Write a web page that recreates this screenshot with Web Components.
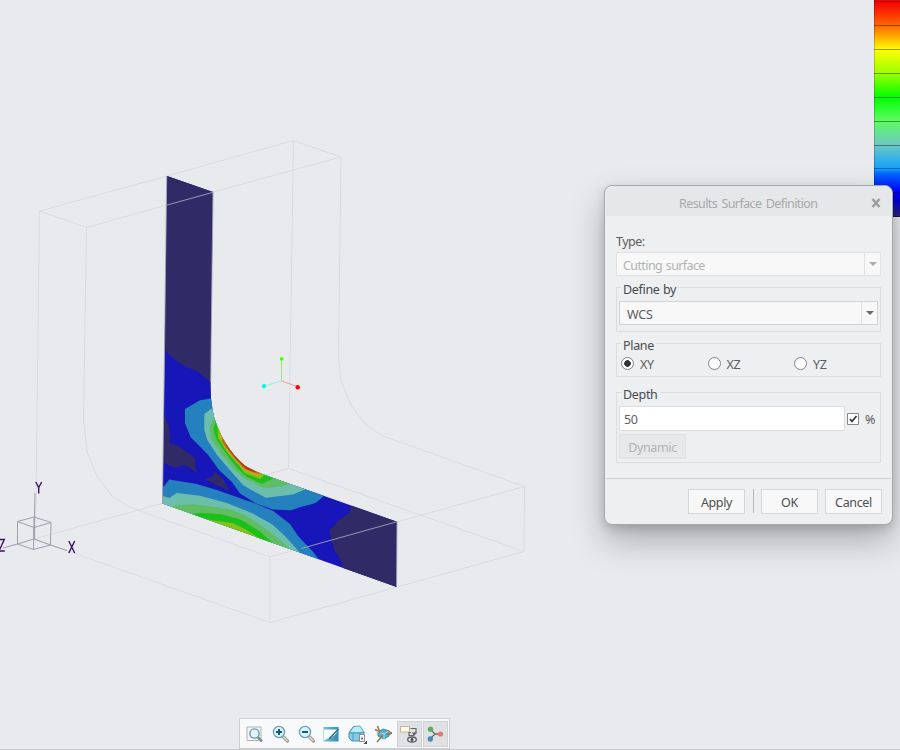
<!DOCTYPE html>
<html lang="en">
<head>
<meta charset="utf-8">
<title>Results Surface Definition</title>
<style>
html,body{margin:0;height:100%;overflow:hidden}
body{background:#e8eaed;font-family:"Noto Sans","Open Sans",sans-serif;font-size:12.5px;color:#5b5d60}
</style>
</head>
<body>
<sim-workspace>
  <stress-view slot="scene"></stress-view>
  <color-legend slot="legend"></color-legend>
  <surface-dialog slot="dialog" heading="Results Surface Definition">
    <field-label>Type:</field-label>
    <combo-box disabled>Cutting surface</combo-box>
    <group-box label="Define by" style="height:45px;margin-top:11px"><combo-box>WCS</combo-box></group-box>
    <group-box label="Plane" style="height:34px;margin-top:11px">
      <radio-row><radio-item checked>XY</radio-item><radio-item>XZ</radio-item><radio-item>YZ</radio-item></radio-row>
    </group-box>
    <group-box label="Depth" style="height:71px;margin-top:15px">
      <depth-field value="50"></depth-field>
      <push-button disabled style="width:67px;margin-top:3px">Dynamic</push-button>
    </group-box>
    <push-button slot="actions" style="width:57px">Apply</push-button>
    <button-divider slot="actions"></button-divider>
    <push-button slot="actions" style="width:57px;margin-right:7px">OK</push-button>
    <push-button slot="actions" style="width:57px">Cancel</push-button>
  </surface-dialog>
  <view-toolbar slot="toolbar">
    <tool-button icon="fit"></tool-button><tool-button icon="in"></tool-button><tool-button icon="out"></tool-button><tool-button icon="paint"></tool-button><tool-button icon="views"></tool-button><tool-button icon="datum"></tool-button><tool-button icon="notes" active></tool-button><tool-button icon="spin" active></tool-button>
  </view-toolbar>
</sim-workspace>
<script>
function define(name, html) {
  customElements.define(name, class extends HTMLElement {
    constructor() {
      super();
      this.attachShadow({mode: 'open'});
    }
    connectedCallback() {
      this.shadowRoot.innerHTML = typeof html === 'function' ? html(this) : html;
    }
  });
}

define('sim-workspace', `<style>
:host{display:grid;grid-template:1fr 32px / 1fr;width:900px;height:750px;position:relative;overflow:hidden;box-sizing:border-box}
:host::after{content:"";position:absolute;left:0;right:0;bottom:0;height:1px;background:#c9cbce}
::slotted([slot=scene]){position:absolute;left:0;top:0}
::slotted([slot=legend]){justify-self:end;align-self:start}
::slotted([slot=dialog]){position:absolute;left:604px;top:185px}
::slotted([slot=toolbar]){grid-row:2;justify-self:start;margin-left:239px}
</style><slot name="scene"></slot><slot name="legend"></slot><slot name="toolbar"></slot><slot name="dialog"></slot>`);

define('color-legend', `<style>
:host{display:block;box-sizing:border-box;width:26px;height:217px;position:relative;z-index:0;
background:repeating-linear-gradient(transparent 0 22.860px,#0006 22.860px 23.860px) 0 -21.500px/100% 240px no-repeat,
linear-gradient(#f00 0,#f50e00 5px,#ff6a00 26px,#ff0 50px,#9f0 74px,#0f0 97px,#5dfc62 121px,#6dc8c4 145px,#10a0ff 169px,#0064ff 174px,#00f 192px,#0000d8 200px,#2b2570 217px);box-shadow:inset 1px 0 #0003}
</style>`);

define('stress-view', `<style>:host{display:block;width:900px;height:750px}svg{display:block}</style>
<svg width="900" height="750" viewBox="0 0 900 750">
<defs><clipPath id="b"><path d="M167 176 213 192 211 340 210.7 382 211 398 212.3 408 214 417 217.500 427 222 437 228.3 447.500 234 455 240 461.500 246 466.500 251.7 469.500 262 474 397 521.7 396.6 587 162.5 503.5z"/></clipPath></defs>
<g fill="none" stroke="#dbdcdd">
<path d="M167 176 39.5 211 35.5 539M167 176 293 140.500 341 157 213 192 86.500 227.500 39.500 211M293.500 140.500 288.500 468.500 162 503.500 34 539M288.500 468.500 524 551.500 270 622.500 34 539M86.500 227.500 83.500 420 87 452 97 476 112 496 128 506 140 511 270 557V622.500M270 557 524.500 486.500 524 551.500M524.500 486.500 383 436 366 425 351 405 341 381 338.500 356 341 157"/></g>
<g clip-path="url(#b)">
<path fill="#1616b9" d="M150 170h260v430h-260z"/>
<g fill="#302b67">
<path d="M160 170h60v216L210.700 382.500 198.300 372 186.700 366.700 178.300 362.300 173 358 164 349.300 160 346z"/>
<path d="M160 405 164 415 168.500 425 170 431.700V443.300L178 445.700 186.700 451.700 195.300 458V467L197 473 190 468 183.300 465 175 467.700 160 461z"/>
<path d="M204.500 479.300 211.700 477 215 471.700 223 479 229.500 491z"/>
<path d="M352 504 349 513.300 340 519.300 329.300 531 334 549 340 559 345 572 410 600V510z"/></g>
<g fill="#2580be">
<path d="M220 398.500H211L200 400.300 185 409V423.300L190.700 437.300 208.300 455 219 470 231.700 481.700 240 493.500 256 503.500 273 509.500 291 510.300 301.700 506.700 315.700 503 325 495 300 460 240 440z"/>
<path d="M160 488 163 487.500 169.300 479.500 196.700 484 216.700 490 236.700 497 256.700 504 273.300 511 290 524 298 536 313 551.700 320 561 160 530z"/></g>
<g fill="#6abeab">
<path d="M220 402 212 408.300 204.300 414V430L207.300 440 217 455 229 469 243 485 250 489.300 266 497.700 293 494.500 306 489 280 460z"/>
<path d="M160 495 169.300 498 176.700 493 200 495.700 227 503 251.700 513 271.700 524 285 536 302 555 160 540z"/></g>
<g fill="#60bd63">
<path d="M220 408 214 416 209.300 428.300 211.700 440 222 455 232.700 467.500 243 477.300 263.300 488.300 281.700 486.500 292 483 260 455z"/>
<path d="M160 510 175 505.500 193.300 504.300 216.700 507.300 232 510 246.700 516 263 526.700 280 540 295 553 160 550z"/></g>
<g fill="#1bc01b">
<path d="M220 412 215.700 421 213.300 429.300 216.700 440 227 455 237.500 468.500 247 477 261.700 484 275 477.500 250 440z"/>
<path d="M190 514.500 200 512.800 221.700 514.300 241.700 520 260 531.500 274 544 230 550z"/></g>
<g fill="#89bf1c">
<path d="M221 421 217.300 427 218 438 228 453.500 238.500 465 245 473.300 260 479 265 474.500 250 440z"/>
<path d="M205 519 213.300 520.500 233.300 523.300 246.700 530 264 541 230 545z"/></g>
<path fill="#cba51b" d="M221 430 219.500 437 230 454 242 467.500 253 474.500 261 476 252 450z"/>
<path fill="#cb661c" d="M222 436 222 442 233 456.500 244 468.500 253 472.500 260 474.500 250 450z"/>
<path fill="#c42a1e" d="M225 441 226.500 446.500 237 460 247 469.500 256 472.500 250 450z"/>
</g>
<g fill="none" stroke="#a4a3b4" stroke-width=".9"><path d="M166.500 205.200 213 192.300M301 548.600 397 521.700"/><path d="M166.700 176 162.500 503.500M213 192 210.700 382M397 521.700 396.500 586.500"/></g>
<g fill="none" stroke="#a29caf"><path d="M35 493 34 539M34 539 50.500 545 67 550.500M34 539 17.500 544 3 548M17.500 521.500 34 517 51 522.500 34 527.500 17.500 521.500V544L33.500 549.500 50.500 545 51 522.500M34 527.500 33.500 549.500M34 517V539"/></g>
<g fill="none" stroke="#3a1260" stroke-width="1.400"><path d="M35.800 482 38.700 487.500 41.700 482M38.700 487.500V493.500M68.800 541 74.700 553M74.700 541 68.800 553M-1 539.500H4.300L-1 551H4.800"/></g>
<path d="M281.500 381V361" stroke="#92e683"/><path d="M281.500 381 266 385.500" stroke="#9beee5"/><path d="M281.500 381 296 386" stroke="#ee9a9d"/>
<circle cx="281.700" cy="358.800" r="1.900" fill="#48ff00"/><circle cx="264" cy="386.200" r="2.100" fill="#00fae4"/><circle cx="297.700" cy="387.200" r="2.200" fill="#f00"/>
</svg>`);

define('surface-dialog', el => `<style>
:host{display:flex;flex-direction:column;box-sizing:border-box;width:288.500px;height:339.500px;border:1px solid #a5a7a9;border-radius:8px;background:#eeeff1;z-index:1;box-shadow:0 16px 34px #0004,0 4px 10px #0002}
header{display:grid;grid-template-columns:30px 1fr 30px;align-items:center;justify-items:center;height:30px;margin:0 1px;background:#e6e7e9;border-radius:7px 7px 0 0;color:#a8a9ab}
header span{letter-spacing:-.6px;word-spacing:1.700px;padding:5px 0 0;white-space:nowrap}
header svg{margin:3px 0 0 1px}
main{flex:1;padding:17px 10.500px 0 11px;display:flex;flex-direction:column}
footer{display:flex;align-items:center;justify-content:flex-end;height:45px;margin:0 1px;border-top:1px solid #cdcfd1;padding-right:8.500px}
</style><header><i></i><span>${el.getAttribute('heading')}</span><svg width="10" height="10" viewBox="0 0 10 10"><path d="M1.500 1 8.500 9M8.500 1 1.500 9" stroke="#9c9d9f" stroke-width="2.600"/></svg></header><main><slot></slot></main><footer><slot name="actions"></slot></footer>`);

define('field-label', `<style>:host{display:block;height:19px;line-height:18px;letter-spacing:-.5px}</style><slot></slot>`);

define('combo-box', `<style>
:host{display:flex;box-sizing:border-box;height:24px;background:#f8f8f8;border:1px solid #d1d3d5}
:host([disabled]){border-color:#e0e1e3;color:#b0b2b4;letter-spacing:-.3px}
span{flex:1;padding:2px 0 0 7px;line-height:22px;letter-spacing:-.25px}
:host([disabled]) span{letter-spacing:-.6px;word-spacing:1px;padding-left:6px}
b{display:grid;place-items:center;width:15px;border-left:1px solid #dfe0e2}
i{border:4px solid transparent;border-top:4px solid #67696c;border-bottom:0}
:host([disabled]) i{border-top-color:#a9abad}
</style><span><slot></slot></span><b><i></i></b>`);

define('group-box', el => `<style>
:host{display:block;box-sizing:border-box;border:1px solid #dcdde0;position:relative;padding:13px 2px 0}
label{position:absolute;left:4px;top:-7px;line-height:18px;height:18px;padding:0 2px;background:#eeeff1;color:#484a4d;letter-spacing:-.32px;word-spacing:.5px;white-space:nowrap}
</style><label>${el.getAttribute('label')}</label><slot></slot>`);

define('radio-row', `<style>:host{display:grid;grid-template-columns:86.500px 86.500px 1fr;padding-left:2px}</style><slot></slot>`);

define('radio-item', `<style>
:host{display:flex;gap:6px;height:16px;line-height:16px;letter-spacing:-.4px}
i{box-sizing:border-box;width:13px;height:13px;border:1px solid #7f8184;border-radius:50%;background:#fff;margin-top:-.5px}
:host([checked]) i{background:radial-gradient(circle,#333 0 3px,#fff 3.600px)}
</style><i></i><span><slot></slot></span>`);

define('depth-field', el => `<style>
:host{display:flex;align-items:center;height:25px}
.v{box-sizing:border-box;width:226px;height:25px;line-height:24px;padding:1px 0 0 4px;border:1px solid #dcdde0;background:#fff;letter-spacing:-.5px}
svg{margin:0 6px 0 2px}
</style><span class="v">${el.getAttribute('value')}</span><svg width="12" height="12" viewBox="0 0 12 12"><path d="M.5.5h11v11H.5z" fill="#fff" stroke="#85878a"/><path d="M3 6 5 8.500 9.500 3" fill="none" stroke="#333" stroke-width="1.700"/></svg><span style="padding-top:2px">%</span>`);

define('push-button', `<style>
:host{display:flex;box-sizing:border-box;height:25px;align-items:center;justify-content:center;border:1px solid #d4d6d8;background:#f8f8f8;color:#4c4e51;letter-spacing:-.35px}
:host([disabled]){background:#e6e8ea;border-color:#dfe1e3;color:#b1b3b6}
span{padding-top:2px}
</style><span><slot></slot></span>`);

define('button-divider', `<style>:host{display:block;width:1px;height:24px;background:#b9bbbd;margin:0 7px 0 8px}</style>`);

define('view-toolbar', `<style>:host{display:flex;box-sizing:border-box;width:211px;height:31px;border:1px solid #cccfd2;background:#f8f9fa;padding:2px 1px 0 2px}</style><slot></slot>`);

const lens = s => `<path d="m13 12.500 4.500 4.500" stroke="#9a9a98" stroke-width="3.200" stroke-linecap="round"/><path d="m13 12.500 4.500 4.500" stroke="#dcdad5" stroke-width="1.500"/><circle cx="9" cy="8" r="5.600" fill="#dcf2fb" stroke="#6a9db5" stroke-width="1.300"/>${s}`;
const icons = {
  fit: `<path d="M3 3h14v13.500h-14z" fill="#f5f5f3" stroke="#b0b2b2"/><path d="m13.500 13 4.500 4.500" stroke="#8d8b88" stroke-width="2.500"/><circle cx="10.500" cy="9.500" r="4.600" fill="#e0f5fc" stroke="#6099b3" stroke-width="1.400"/>`,
  in: lens('<path d="M9 5v6M6 8h6" stroke="#075b85" stroke-width="2"/>'),
  out: lens('<path d="M6 8h6" stroke="#075b85" stroke-width="2"/>'),
  paint: `<defs><linearGradient id="g" x2="1"><stop stop-color="#7cc3d8"/><stop offset="1" stop-color="#2c8bac"/></linearGradient></defs><path d="M2.500 3h15v14.500H2.500z" fill="url(#g)"/><path d="M3 5.500H17Q15 12 8 14.500 4 15 3 17z" fill="#f8fcfe"/><path d="M17.500 5 8 15" stroke="#24678a" stroke-width="1.300"/>`,
  views: `<path d="M6.500 2.500 13 2 17 8 13 9H2z" fill="#bceaf7" stroke="#58a5c1"/><path d="M2 9h11v8H5l-3-3zM13 9l4-1v7l-4 2z" fill="#83cce3" stroke="#4698b8"/><path d="M6.500 2.500 2 9M6 9v8" stroke="#4c9cbb"/><path d="M12.500 10.500h5v7h-5z" fill="#fafafa" stroke="#8b8d8e"/><path d="M14 13.500h2v2h-2z" fill="#777"/><path d="M20 16.500v3.500h-3.500z" fill="#444"/>`,
  datum: `<path d="m5 8 5-3 6 2v5l-5 3-6-3z" fill="#55b1d0" stroke="#3a88a8"/><path d="m5 8 6 2 5-3M11 10v5" fill="none" stroke="#9edff2"/><path d="M4.500 2 7 9M19 9 13 10M4 18l6-7M2 5.500l3 1.500" stroke="#9a794a" stroke-width="1.600"/><path d="m15 6.500 4 2.500-3 2" fill="none" stroke="#8c6942"/>`,
  notes: `<path d="M1.500 2.500h9v5.500h-9z" fill="#fff9e7" stroke="#c5b69b"/><path d="M11.500 4.500h5.500v5M12 8.500h-2v3h5" fill="none" stroke="#65676a" stroke-width="1.200"/><path d="m13 8.500h5l-3 3.500z" fill="#5b5d60"/><ellipse cx="13" cy="15.500" rx="4.300" ry="2.500" fill="#eee" stroke="#5a5c5e" stroke-width="1.300"/><circle cx="13" cy="15.500" r="1.500" fill="#444"/>`,
  spin: `<path d="m5 5 5 5h7M10 10l-5 5" fill="none" stroke="#6a6a6a" stroke-width="1.300"/><circle cx="5.500" cy="5.300" r="2.700" fill="#62aa60"/><circle cx="15.500" cy="10" r="2.600" fill="#e6766f"/><circle cx="5.300" cy="15" r="2.700" fill="#438eb5"/>`
};
define('tool-button', el => `<style>
:host{display:grid;place-items:center;box-sizing:border-box;flex:none;width:25.700px;height:26px}
:host([active]){background:#dfe1e4;border:1px solid #cfd1d4;width:25px;margin-left:.75px}
svg{display:block}
</style><svg width="21" height="21" viewBox="0 0 21 21">${icons[el.getAttribute('icon')]}</svg>`);
</script>
</body>
</html>
